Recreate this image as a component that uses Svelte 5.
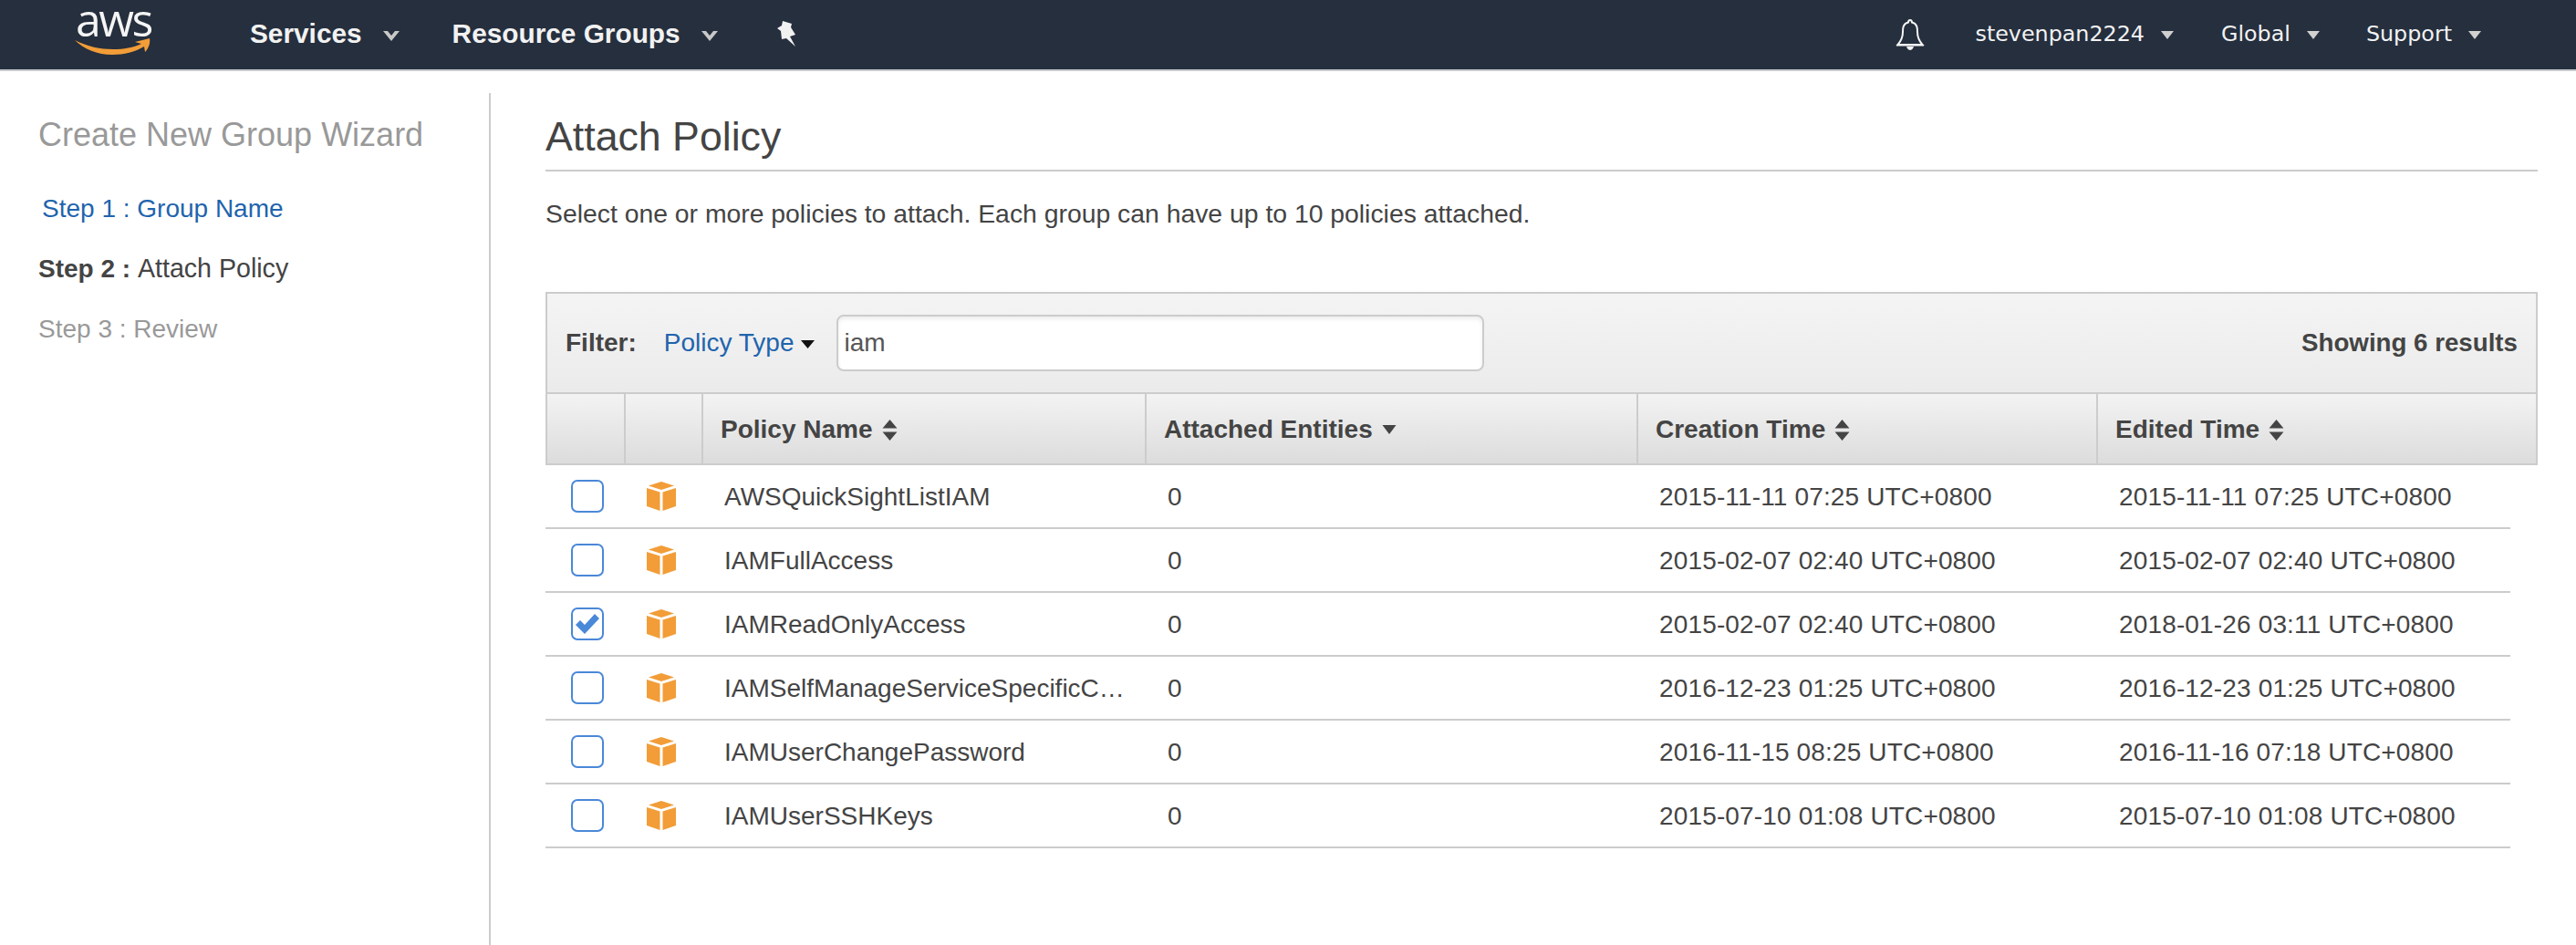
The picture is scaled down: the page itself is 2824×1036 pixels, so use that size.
<script>
  const rows = [
    { name: 'AWSQuickSightListIAM', created: '2015-11-11 07:25 UTC+0800', edited: '2015-11-11 07:25 UTC+0800' },
    { name: 'IAMFullAccess', created: '2015-02-07 02:40 UTC+0800', edited: '2015-02-07 02:40 UTC+0800' },
    { name: 'IAMReadOnlyAccess', created: '2015-02-07 02:40 UTC+0800', edited: '2018-01-26 03:11 UTC+0800', checked: true },
    { name: 'IAMSelfManageServiceSpecificCredentials', created: '2016-12-23 01:25 UTC+0800', edited: '2016-12-23 01:25 UTC+0800' },
    { name: 'IAMUserChangePassword', created: '2016-11-15 08:25 UTC+0800', edited: '2016-11-16 07:18 UTC+0800' },
    { name: 'IAMUserSSHKeys', created: '2015-07-10 01:08 UTC+0800', edited: '2015-07-10 01:08 UTC+0800' }
  ];
</script>

{#snippet sort()}
  <svg class="sort" width="17" height="23" viewBox="0 0 16 24" preserveAspectRatio="none"><path d="M8 0l7.500 10H.5zM8 24L.5 14h15z" fill="#444"/></svg>
{/snippet}

{#snippet navcaret()}
  <svg class="navcaret" width="18" height="11" viewBox="0 0 18 11"><path d="M0 0l5 0 4 5 4-5 5 0-9 11z" fill="#c8c8c8"/></svg>
{/snippet}

{#snippet smallcaret()}
  <svg class="smallcaret" width="14" height="9" viewBox="0 0 14 9"><path d="M0 0h14l-7 9z" fill="#d0d0d0"/></svg>
{/snippet}

<div class="page">
  <header class="topbar">
    <div class="logo">
      <span class="logotext">aws</span>
      <svg class="swoosh" width="84" height="18" viewBox="0 0 84 18"><path d="M0 2C14 9 28 12 42 12 54 12 64 10 73 6L66 4 82 0C83 5 81 11 77 15L76 9C66 15 54 18 41 18 25 18 10 12 0 2z" fill="#f29d38"/></svg>
    </div>
    <span class="navmain services">Services</span>
    {@render navcaret()}
    <span class="navmain groups">Resource Groups</span>
    {@render navcaret()}
    <svg class="pin" width="25" height="28" viewBox="0 0 25 28"><path d="M7 0l10 3-1 4 5 8-6 2 6 11-10-9-5 1-1-9-4-3 5-3z" fill="#f2f2f2"/></svg>
    <div class="right">
      <svg class="bell" width="32" height="35" viewBox="0 0 32 35"><path d="M16 2c-1.500 0-2 1-2 2.500C8 6 8 11 8 15c0 6-2 10-5.500 14h27C26 25 24 21 24 15c0-4 0-9-6-10.500C18 3 17.500 2 16 2z" fill="none" stroke="#f5f5f5" stroke-width="2"/><path d="M1 29h30v1.500H1zM12 31h8c-1 3-3 4-4 4s-3-1-4-4z" fill="#f5f5f5"/></svg>
      <span class="navsub user">stevenpan2224</span>
      {@render smallcaret()}
      <span class="navsub global">Global</span>
      {@render smallcaret()}
      <span class="navsub support">Support</span>
      {@render smallcaret()}
    </div>
  </header>

  <div class="body">
    <aside class="side">
      <h2>Create New Group Wizard</h2>
      <a class="step link">Step 1 : Group Name</a>
      <div class="step current"><b>Step 2 :</b> <span class="cur">Attach Policy</span></div>
      <div class="step muted">Step 3 : Review</div>
    </aside>

    <main class="main">
      <h1>Attach Policy</h1>
      <p class="lead">Select one or more policies to attach. Each group can have up to 10 policies attached.</p>

      <section class="table">
        <div class="filter">
          <b class="flabel">Filter:</b>
          <span class="ftype">Policy Type</span>
          <svg class="fcaret" width="15" height="9" viewBox="0 0 15 9"><path d="M0 0h15L7.500 9z" fill="#111"/></svg>
          <div class="finput">iam</div>
          <b class="count">Showing 6 results</b>
        </div>
        <div class="grid head">
          <div></div>
          <div></div>
          <div>Policy Name {@render sort()}</div>
          <div>Attached Entities <svg class="sort" width="16" height="10" viewBox="0 0 16 10"><path d="M.5 0h15L8 10z" fill="#444"/></svg></div>
          <div>Creation Time {@render sort()}</div>
          <div>Edited Time {@render sort()}</div>
        </div>
      </section>

      <div class="rows">
        {#each rows as r}
          <div class="grid row">
            <div class="cellbox">
              <span class="check">
                {#if r.checked}
                  <svg width="28" height="24" viewBox="0 0 28 24"><path d="M1 13l5-5 5 5L22 1l5 5-16 17z" fill="#4a88d8"/></svg>
                {/if}
              </span>
            </div>
            <div class="cellicon">
              <svg width="32" height="32" viewBox="0 0 32 32">
                <path d="M16 0l14 4.500L16 9 2 4.500z" fill="#f29d38"/>
                <path d="M0 7l14.500 4.500V32L0 27zM32 7l-14.500 4.500V32L32 27z" fill="#f29d38"/>
              </svg>
            </div>
            <div class="name txt">{r.name}</div>
            <div class="txt">0</div>
            <div class="date txt">{r.created}</div>
            <div class="date txt">{r.edited}</div>
          </div>
        {/each}
      </div>
    </main>
  </div>
</div>

<style>
  :global(body) { margin: 0; background: #fff; }
  .page {
    width: 2824px; height: 1036px; overflow: hidden;
    display: flex; flex-direction: column;
    font-family: "Liberation Sans", Arial, sans-serif; font-size: 28px; color: #444;
  }
  .topbar {
    height: 76px; background: #252f3e; border-bottom: 2px solid #c8cacc;
    display: flex; align-items: center; padding-left: 82px; flex: none;
  }
  .logo { width: 84px; height: 60px; position: relative; margin-right: 108px; }
  .logotext {
    position: absolute; left: 1px; top: -7px; font-family: "Open Sans", sans-serif; color: #f5f5f5;
    font-size: 50px; line-height: 40px; letter-spacing: -2.500px;
  }
  .swoosh { position: absolute; left: 0; top: 34px; }
  .navmain { color: #f2f2f2; font-weight: 700; font-size: 29.800px; margin-top: -2px; }
  .navcaret { margin-left: 23px; margin-top: 3px; }
  .groups { margin-left: 58px; }
  .pin { margin-left: 64px; margin-top: -2px; }
  .right { margin-left: auto; display: flex; align-items: center; padding-right: 104px; }
  .bell { margin-right: 55px; margin-top: -1px; }
  .navsub { color: #f2f2f2; font-family: "DejaVu Sans", sans-serif; font-size: 23.800px; margin-top: -2px; }
  .smallcaret { margin-left: 18px; margin-top: 0; }
  .global { margin-left: 52px; }
  .support { margin-left: 51px; }

  .body { flex: 1; display: flex; min-height: 0; }
  .side {
    width: 494px; margin-top: 24px; padding-left: 42px; border-right: 2px solid #ccc; flex: none;
  }
  .side h2 { margin: 24px 0 0; font-size: 36px; line-height: 44px; font-weight: 400; color: #999; }
  .step { display: block; line-height: 40px; height: 40px; }
  .link { color: #1f64ad; margin: 39px 0 0 4px; }
  .current { margin-top: 26px; }
  .current b { font-weight: 700; }
  .cur { font-size: 28.600px; line-height: 0; }
  .muted { color: #999; margin-top: 26px; }

  .main { flex: 1; padding: 44px 42px 0 60px; min-width: 0; }
  h1 { margin: 0; font-size: 44.700px; line-height: 56px; font-weight: 400; color: #444; padding-bottom: 8px; border-bottom: 2px solid #ccc; }
  .lead { margin: 28px 0 0; line-height: 36px; font-size: 28.350px; }

  .table { margin-top: 68px; border: 2px solid #ccc; border-bottom: none; }
  .filter {
    height: 108px; display: flex; align-items: center; padding: 0 20px;
    background: linear-gradient(#f4f4f4, #ebebeb); border-bottom: 2px solid #ccc;
    font-weight: 400;
  }
  .flabel { font-weight: 700; }
  .ftype { color: #1f64ad; margin-left: 30px; }
  .fcaret { margin-left: 8px; margin-top: 3px; }
  .finput {
    margin-left: 24px; width: 710px; height: 62px; box-sizing: border-box; border: 2px solid #ccc; border-radius: 8px;
    background: #fff; padding-left: 6px; line-height: 58px; box-shadow: inset 0 3px 4px #eee; color: #555;
  }
  .count { margin-left: auto; font-weight: 700; font-size: 27.700px; }

  .grid { display: grid; grid-template-columns: 86px 85px 486px 539px 504px 1fr; }
  .head {
    height: 76px; background: linear-gradient(#f3f3f3, #dcdcdc); border-bottom: 2px solid #ccc;
    box-sizing: content-box; font-weight: 700;
  }
  .head > div { display: flex; align-items: center; gap: 10px; padding: 2px 0 0 19px; border-right: 2px solid #ccc; box-sizing: border-box; }
  .head > div:last-child { border-right: none; }
  .sort { flex: none; }

  .rows { margin-right: 30px; }
  .row { height: 70px; box-sizing: border-box; border-bottom: 2px solid #ccc; align-items: center; }
  .row > .txt { padding: 1px 0 0 25px; min-width: 0; }
  .date { letter-spacing: 0.150px; }
  .row > .name { overflow: hidden; white-space: nowrap; text-overflow: ellipsis; padding-right: 16px; }
  .cellbox { padding-left: 28px; display: flex; }
  .cellicon { padding-left: 25px; display: flex; }
  .check {
    width: 36px; height: 36px; box-sizing: border-box; border: 2px solid #4a88d8; border-radius: 7px;
    display: flex; align-items: center; justify-content: center;
  }
</style>
